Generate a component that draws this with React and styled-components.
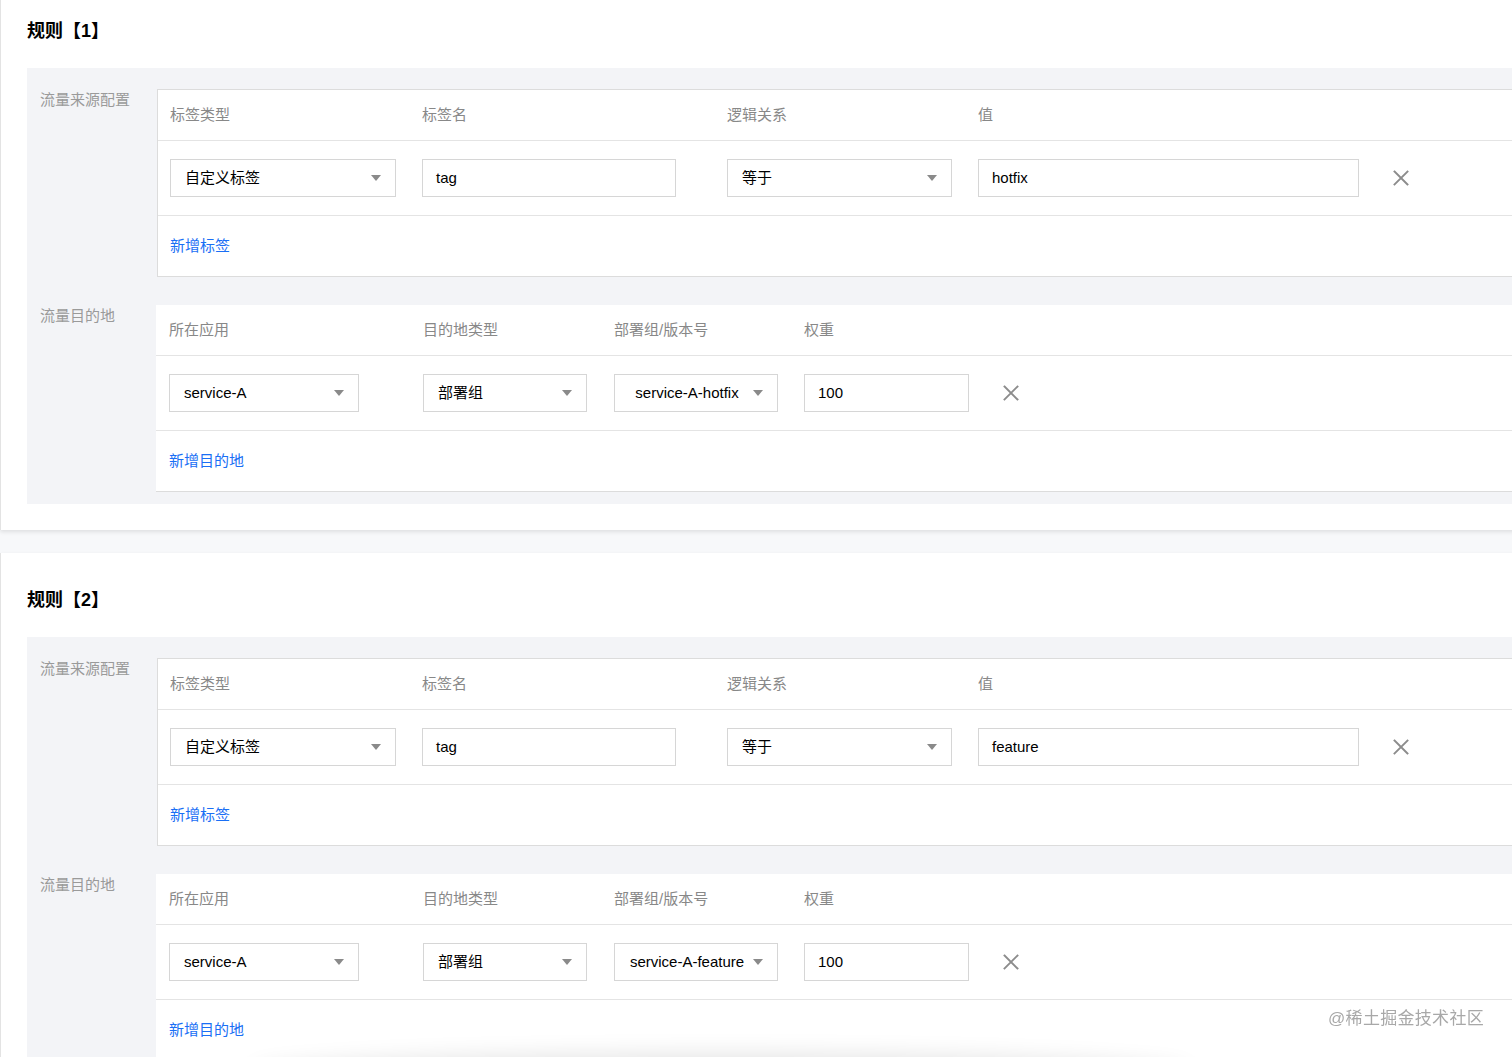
import React from "react";
import styled, { createGlobalStyle } from "styled-components";

const FONT = `"Liberation Sans", "Noto Sans CJK SC", sans-serif`;

const Global = createGlobalStyle`
  html, body { margin: 0; padding: 0; }
  body {
    background: #f7f8fa;
    font-family: ${FONT};
    overflow: hidden;
  }
`;

const Page = styled.div`
  display: flex;
  flex-direction: column;
  gap: 23px;
  margin-top: -16px;
  width: 1540px;
`;

const Card = styled.section`
  background: #fff;
  border-left: 1px solid #e3e3e3;
  box-shadow: 0 2px 4px rgba(0, 0, 0, 0.1);
  padding: 34px 0 26px 26px;
`;

const Title = styled.h2`
  margin: 0 0 24px;
  font-size: 18px;
  line-height: 26px;
  font-weight: 700;
  color: #000;
`;

const Panel = styled.div`
  background: #f3f4f7;
  padding: 21px 0 12px;
  display: flex;
  flex-direction: column;
  gap: 28px;
`;

const Section = styled.div`
  display: grid;
  grid-template-columns: 129px 1fr;
`;

const SectionLabel = styled.div`
  padding: 1px 0 0 13px;
  font-size: 15px;
  line-height: 20px;
  color: #9a9a9a;
`;

const Table = styled.div`
  background: #fff;
  border: ${(p) => (p.$boxed ? "1px solid #dcdcdc" : "none")};
  border-bottom: 1px solid #dcdcdc;
  margin-left: ${(p) => (p.$boxed ? "1px" : "0")};
`;

const Row = styled.div`
  display: grid;
  grid-template-columns: ${(p) => p.$cols};
  align-items: center;
  height: ${(p) => p.$h}px;
  border-bottom: ${(p) => (p.$last ? "none" : "1px solid #e4e4e4")};
`;

const Cell = styled.div`
  padding-left: ${(p) => (p.$pad ?? 13)}px;
  display: flex;
  align-items: center;
  min-width: 0;
`;

const HeadText = styled.span`
  font-size: 15px;
  line-height: 20px;
  color: #888;
`;

const Field = styled.div`
  box-sizing: border-box;
  width: ${(p) => p.$w}px;
  height: 38px;
  border: 1px solid #d6d6d6;
  background: #fff;
  display: flex;
  align-items: center;
  padding: ${(p) => (p.$select ? "0 14px 0 14px" : "0 13px")};
  font-size: 15px;
  color: #000;
  gap: 8px;
`;

const FieldText = styled.span`
  flex: 1;
  white-space: nowrap;
  text-align: ${(p) => (p.$center ? "center" : "left")};
  line-height: 20px;
`;

const Caret = styled.span`
  width: 0;
  height: 0;
  border-left: 5px solid transparent;
  border-right: 5px solid transparent;
  border-top: 6px solid #8a8a8a;
  flex: none;
`;

const Link = styled.a`
  font-size: 15px;
  line-height: 20px;
  color: #1a6ff5;
  cursor: pointer;
`;

const RemoveButton = styled.button`
  border: 0;
  background: none;
  padding: 0;
  width: 18px;
  height: 18px;
  display: flex;
  align-items: center;
  justify-content: center;
  cursor: pointer;
`;

const Watermark = styled.div`
  position: fixed;
  right: 28px;
  bottom: 26px;
  font-size: 17px;
  line-height: 24px;
  color: #a8a8a8;
  letter-spacing: 0.3px;
  text-shadow: 0 0 1px #fff;
`;

const BottomShade = styled.div`
  position: fixed;
  left: 250px;
  right: 320px;
  bottom: -40px;
  height: 40px;
  border-radius: 50%;
  box-shadow: 0 -4px 22px rgba(0, 0, 0, 0.1);
`;

const CloseIcon = () => (
  <svg width="16" height="16" viewBox="0 0 16 16">
    <path d="M1.5 1.5 L14.5 14.5 M14.5 1.5 L1.5 14.5" stroke="#8c8c8c" strokeWidth="1.9" strokeLinecap="square" fill="none" />
  </svg>
);

const Select = ({ w, children, center }) => (
  <Field $w={w} $select>
    <FieldText $center={center}>{children}</FieldText>
    <Caret />
  </Field>
);

const Input = ({ w, children }) => (
  <Field $w={w}>
    <FieldText>{children}</FieldText>
  </Field>
);

const SRC_COLS = "252px 305px 251px 414px 1fr";
const DST_COLS = "254px 191px 190px 198px 1fr";

const SourceTable = ({ value }) => (
  <Table $boxed>
    <Row $cols={SRC_COLS} $h={50}>
      <Cell $pad={12}><HeadText>标签类型</HeadText></Cell>
      <Cell $pad={12}><HeadText>标签名</HeadText></Cell>
      <Cell $pad={12}><HeadText>逻辑关系</HeadText></Cell>
      <Cell $pad={12}><HeadText>值</HeadText></Cell>
      <Cell $pad={12} />
    </Row>
    <Row $cols={SRC_COLS} $h={74}>
      <Cell $pad={12}><Select w={226}>自定义标签</Select></Cell>
      <Cell $pad={12}><Input w={254}>tag</Input></Cell>
      <Cell $pad={12}><Select w={225}>等于</Select></Cell>
      <Cell $pad={12}><Input w={381}>{value}</Input></Cell>
      <Cell $pad={12}><RemoveButton aria-label="删除"><CloseIcon /></RemoveButton></Cell>
    </Row>
    <Row $cols="1fr" $h={60} $last>
      <Cell $pad={12}><Link>新增标签</Link></Cell>
    </Row>
  </Table>
);

const DestTable = ({ version }) => (
  <Table>
    <Row $cols={DST_COLS} $h={50}>
      <Cell><HeadText>所在应用</HeadText></Cell>
      <Cell><HeadText>目的地类型</HeadText></Cell>
      <Cell><HeadText>部署组/版本号</HeadText></Cell>
      <Cell><HeadText>权重</HeadText></Cell>
      <Cell />
    </Row>
    <Row $cols={DST_COLS} $h={74}>
      <Cell><Select w={190}>service-A</Select></Cell>
      <Cell><Select w={164}>部署组</Select></Cell>
      <Cell><Select w={164} center>{version}</Select></Cell>
      <Cell><Input w={165}>100</Input></Cell>
      <Cell><RemoveButton aria-label="删除"><CloseIcon /></RemoveButton></Cell>
    </Row>
    <Row $cols="1fr" $h={60} $last>
      <Cell><Link>新增目的地</Link></Cell>
    </Row>
  </Table>
);

const rules = [
  { id: 1, value: "hotfix", version: "service-A-hotfix" },
  { id: 2, value: "feature", version: "service-A-feature" },
];

export default function App() {
  return (
    <>
      <Global />
      <Page>
        {rules.map((r) => (
          <Card key={r.id}>
            <Title>规则【{r.id}】</Title>
            <Panel>
              <Section>
                <SectionLabel>流量来源配置</SectionLabel>
                <SourceTable value={r.value} />
              </Section>
              <Section>
                <SectionLabel>流量目的地</SectionLabel>
                <DestTable version={r.version} />
              </Section>
            </Panel>
          </Card>
        ))}
      </Page>
      <BottomShade />
      <Watermark>@稀土掘金技术社区</Watermark>
    </>
  );
}
